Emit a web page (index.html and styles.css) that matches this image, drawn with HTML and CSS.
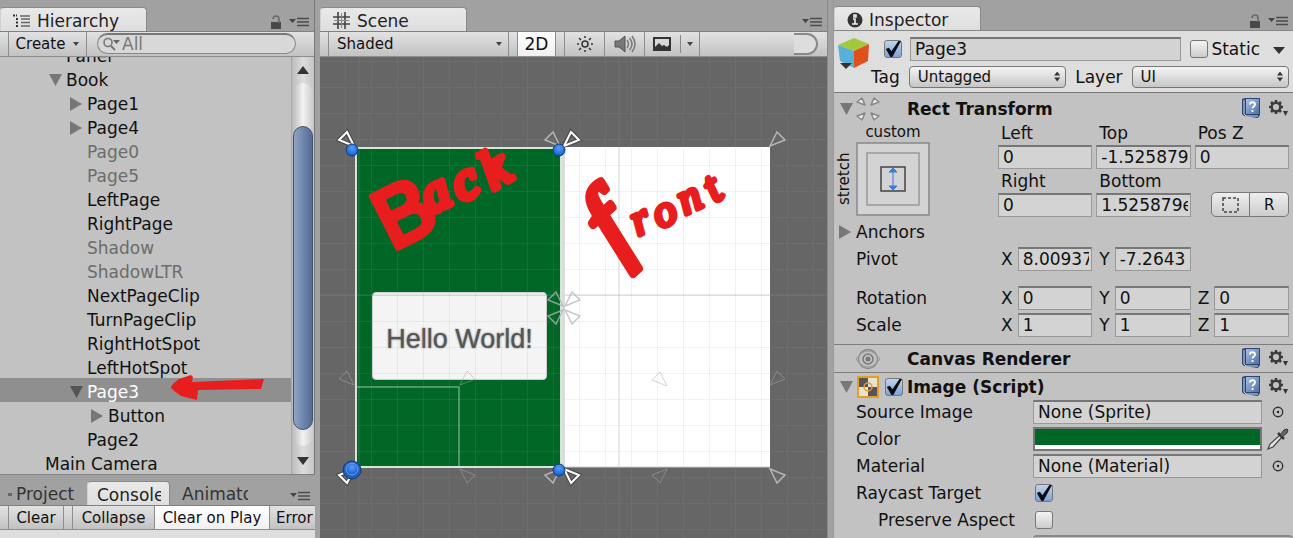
FILE: index.html
```html
<!DOCTYPE html>
<html lang="en">
<head>
<meta charset="utf-8">
<title>Editor</title>
<link rel="stylesheet" href="styles.css">
</head>
<body>
<svg class="defs" aria-hidden="true">
  <defs>
    <linearGradient id="bookFill" x1="0" y1="0" x2="1" y2="1"><stop offset="0" stop-color="#a9bfdd"/><stop offset="1" stop-color="#4d6fa4"/></linearGradient>
    <radialGradient id="knob" cx=".5" cy=".35" r=".7"><stop offset="0" stop-color="#5b9df5"/><stop offset="1" stop-color="#0a55cf"/></radialGradient>
    <symbol id="i-lock" viewBox="0 0 12 15"><path d="M1 7h10v7H1z" fill="#484848"/><path d="M3 4a3 3 0 0 1 6 0v4" fill="none" stroke="#6a6a6a" stroke-width="1.6"/></symbol>
    <symbol id="i-menu" viewBox="0 0 20 10"><path d="M0 2h7L3.500 6z" fill="#444"/><path d="M8 1.500h12M8 5h12M8 8.500h12" stroke="#4c4c4c" stroke-width="1.600"/></symbol>
    <symbol id="i-book" viewBox="0 0 20 22"><path d="M1 2l3-1h15v17l-2 3-14-2-2-2z" fill="#2c4674"/><path d="M5 2h13v15H5z" fill="url(#bookFill)"/><path d="M3 3v14l2 2h12" fill="none" stroke="#d5dfee"/><path d="M9 7.500c0-3 5-3 5 0 0 2-2.500 2-2.500 4M11.500 13v2" fill="none" stroke="#fff" stroke-width="1.800"/></symbol>
    <symbol id="i-gear" viewBox="0 0 20 18"><circle cx="8" cy="8" r="4.300" fill="none" stroke="#3b3b3b" stroke-width="2.400"/><path d="M8 1v2M8 13v2M1 8h2M13 8h2M3 3l1.500 1.500M11.500 11.500L13 13M3 13l1.500-1.500M11.500 4.500L13 3" stroke="#3b3b3b" stroke-width="2.600"/><path d="M15 12h5l-2.500 5z" fill="#333"/></symbol>
    <symbol id="i-target" viewBox="0 0 12 12"><circle cx="6" cy="6" r="4.700" fill="none" stroke="#333" stroke-width="1.400"/><circle cx="6" cy="6" r="1.200" fill="#222"/></symbol>
    <path id="tri" d="M1-2L8-16L16-8Z" fill="none"/>
    <pattern id="grid" x="319" y="35" width="26" height="26" patternUnits="userSpaceOnUse"><path d="M0 .5H26M.5 0V26" stroke="#999" stroke-opacity=".13" fill="none"/></pattern>
  </defs>
</svg>

<main class="editor">
  <div class="left">
    <section class="panel hierarchy">
      <header class="tabs">
        <div class="tab active tab-wide">
          <svg width="18" height="14" viewBox="0 0 18 14"><path d="M0 1.500h4M3 5h3M3 8.500h3M3 12h3" stroke="#333" stroke-width="2" stroke-dasharray="2 1"/><path d="M7 2h10M8 5h9M8 8.500h9M8 12h9" stroke="#666" stroke-width="1.300"/></svg>
          <span>Hierarchy</span>
        </div>
        <div class="tab-tools"><svg width="12" height="15"><use href="#i-lock"/></svg><svg width="20" height="10"><use href="#i-menu"/></svg></div>
      </header>
      <div class="toolbar">
        <button class="tool create">Create <i class="caret"></i></button>
        <label class="search"><svg width="18" height="14" viewBox="0 0 18 14"><circle cx="5" cy="5.500" r="4" fill="none" stroke="#777" stroke-width="1.600"/><path d="M8 9l4 4" stroke="#777" stroke-width="2"/><path d="M10 3h7l-3.500 4z" fill="#666"/></svg><input type="text" placeholder="All" aria-label="Search hierarchy"></label>
      </div>
      <div class="tree-wrap">
        <ul class="tree">
          <li class="d1">Panel</li>
          <li class="d1"><i class="arrow down"></i>Book</li>
          <li class="d2"><i class="arrow"></i>Page1</li>
          <li class="d2"><i class="arrow"></i>Page4</li>
          <li class="d2 off">Page0</li>
          <li class="d2 off">Page5</li>
          <li class="d2">LeftPage</li>
          <li class="d2">RightPage</li>
          <li class="d2 off">Shadow</li>
          <li class="d2 off">ShadowLTR</li>
          <li class="d2">NextPageClip</li>
          <li class="d2">TurnPageClip</li>
          <li class="d2">RightHotSpot</li>
          <li class="d2">LeftHotSpot</li>
          <li class="d2 selected"><i class="arrow down"></i>Page3
            <svg class="pointer" width="94" height="26" viewBox="0 0 94 26"><path d="M0 12Q1 9 8 4L20 0l2 2-1 5 72-3-3 10-63 1-1 10-16-4Q4 17 0 13z" fill="#e81e1e"/></svg></li>
          <li class="d3"><i class="arrow"></i>Button</li>
          <li class="d2">Page2</li>
          <li class="d0">Main Camera</li>
        </ul>
        <div class="scrollbar"><i class="up"></i><div class="track"><div class="thumb"></div></div><i class="dn"></i></div>
      </div>
    </section>
    <section class="panel console">
      <header class="tabs">
        <div class="tab"><i class="dot"></i>Project</div>
        <div class="tab active clip"><span>Console</span></div>
        <div class="tab clip anim"><span>Animator</span></div>
        <div class="tab-tools"><svg width="20" height="10"><use href="#i-menu"/></svg></div>
      </header>
      <div class="toolbar">
        <button class="tool clear">Clear</button>
        <button class="tool collapse">Collapse</button>
        <button class="tool on">Clear on Play</button>
        <button class="tool error">Error</button>
      </div>
      <div class="log"></div>
    </section>
  </div>

  <section class="panel scene">
    <header class="tabs">
      <div class="tab active tab-wide">
        <svg width="18" height="18" viewBox="0 0 18 18"><path d="M0 5h17M0 12h17M5 0v17M12 0v17" stroke="#444" stroke-width="1.600"/><path d="M1 8.500h15M8.500 1v15" stroke="#888"/></svg>
        <span>Scene</span>
      </div>
      <div class="tab-tools"><svg width="20" height="10"><use href="#i-menu"/></svg></div>
    </header>
    <div class="toolbar">
      <button class="tool shaded">Shaded <i class="caret"></i></button>
      <button class="tool on two-d">2D</button>
      <button class="tool icon" aria-label="Lighting"><svg width="18" height="18" viewBox="0 0 18 18"><circle cx="9" cy="9" r="3" fill="none" stroke="#333" stroke-width="1.500"/><path d="M9 1v2M9 15v2M1 9h2M15 9h2M3 3l2 2M13 13l2 2M3 15l2-2M13 5l2-2" stroke="#333" stroke-width="1.500"/></svg></button>
      <button class="tool icon" aria-label="Audio"><svg width="22" height="18" viewBox="0 0 22 18"><path d="M1 6h4l6-5v16l-6-5H1z" fill="#777" stroke="#555"/><path d="M13 5q3 4 0 8M15.500 3q5 6 0 12M18 1q6 8 0 16" fill="none" stroke="#777" stroke-width="1.500"/></svg></button>
      <button class="tool effects" aria-label="Effects"><svg width="18" height="14" viewBox="0 0 18 14"><path d="M0 0h18v14H0z" fill="#333"/><path d="M2 2h14v6l-2 2-3-2-2 1-3-3-4 4z" fill="#d8d8d8"/></svg><i class="sep"></i><i class="caret"></i></button>
      <div class="search-end"><i></i></div>
    </div>
    <div class="view">
      <svg viewBox="320 57 507 481" preserveAspectRatio="xMidYMid slice">
        <rect x="320" y="57" width="507" height="481" fill="#666"/>
        <path d="M561 147H770V467H561z" fill="#fff"/>
        <path d="M356 147H561V467H356z" fill="#006727"/>
        <foreignObject x="372" y="292" width="175" height="88"><button class="hello">Hello World!</button></foreignObject>
        <rect x="320" y="57" width="507" height="481" fill="url(#grid)"/>
        <path d="M320 295H827M619 57V538M359 57V538" stroke="#888" stroke-opacity=".35" fill="none"/>
        <path d="M563 147V467" stroke="#dcdcdc" stroke-width="4"/>
        <path d="M356 387H459V467" fill="none" stroke="#c8dccb" stroke-opacity=".4" stroke-width="2"/>
        <path d="M356 148H561V467H356z" fill="none" stroke="#d5e6d8" stroke-width="2"/>
        <path d="M561 467H770" stroke="#ccc"/>
        <g stroke="#222" stroke-opacity=".45" stroke-width="4">
          <use href="#tri" transform="translate(355 148) scale(-1 1)"/><use href="#tri" transform="translate(563 148)"/><use href="#tri" transform="translate(563 467) scale(1 -1)"/><use href="#tri" transform="translate(355 467) scale(-1 -1)"/>
        </g>
        <g stroke="#fff" stroke-width="2">
          <use href="#tri" transform="translate(355 148) scale(-1 1)"/><use href="#tri" transform="translate(563 148)"/><use href="#tri" transform="translate(563 467) scale(1 -1)"/><use href="#tri" transform="translate(355 467) scale(-1 -1)"/>
        </g>
        <g stroke="#b5b5b5" stroke-width="1.500">
          <use href="#tri" transform="translate(561 148) scale(-1 1)"/><use href="#tri" transform="translate(561 467) scale(-1 -1)"/><use href="#tri" transform="translate(769 148)"/><use href="#tri" transform="translate(769 467) scale(1 -1)"/>
          <g stroke-opacity=".75"><use href="#tri" transform="translate(564 308)"/><use href="#tri" transform="translate(564 308) scale(-1 1)"/><use href="#tri" transform="translate(564 308) scale(1 -1)"/><use href="#tri" transform="translate(564 308) scale(-1 -1)"/></g>
        </g>
        <g stroke="#aaa" stroke-opacity=".5">
          <use href="#tri" transform="translate(355 387) scale(-1 1)"/><use href="#tri" transform="translate(459 387)"/><use href="#tri" transform="translate(459 467) scale(1 -1)"/><use href="#tri" transform="translate(769 387)"/><use href="#tri" transform="translate(668 388) scale(-1 1)"/><use href="#tri" transform="translate(668 467) scale(-1 -1)"/>
        </g>
        <g fill="url(#knob)" stroke="#123a7c"><circle cx="352" cy="150" r="6"/><circle cx="559" cy="150" r="6"/><circle cx="559" cy="470" r="6"/><circle cx="352" cy="470" r="9" fill="#1f5fba"/><circle cx="352" cy="469" r="6" stroke="#6aa2ee"/></g>
        <g class="ink">
          <text><tspan class="ink-cap" x="392" y="251" rotate="-27">B</tspan><tspan class="ink-word" x="430 461 493" y="214 202 190" rotate="-25 -25 -30">ack</tspan></text>
          <text><tspan class="ink-f" x="618" y="259" rotate="-42">f</tspan><tspan class="ink-small" x="638 660 685 715" y="236 229 215 203" rotate="-25 -25 -25 -35">ront</tspan></text>
        </g>
      </svg>
    </div>
  </section>

  <section class="panel inspector">
    <header class="tabs">
      <div class="tab active tab-wide">
        <svg width="16" height="16" viewBox="0 0 16 16"><circle cx="8" cy="8" r="7.500" fill="#333"/><path d="M6 7h2v5M5 12h6M7 3h2v2H7z" fill="none" stroke="#eee" stroke-width="1.600"/></svg>
        <span>Inspector</span>
      </div>
      <div class="tab-tools"><svg width="12" height="15"><use href="#i-lock"/></svg><svg width="20" height="10"><use href="#i-menu"/></svg></div>
    </header>
    <div class="object">
      <svg class="cube" width="34" height="34" viewBox="0 0 34 34"><path d="M1 8L17 1l15 6-15 7z" fill="#a4c83c"/><path d="M1 8l16 6v17L3 24z" fill="#59b0d8"/><path d="M17 14L32 7l-1 17-14 7z" fill="#e0501c"/><path d="M3 26h12l-6 6z" fill="#333"/></svg>
      <div class="object-rows">
        <div class="name-row">
          <input type="checkbox" checked aria-label="Active">
          <input type="text" class="field name" value="Page3" aria-label="Name">
          <label class="static"><input type="checkbox">Static</label><i class="caret big"></i>
        </div>
        <div class="tag-row">
          <label for="tag">Tag</label><div class="sel"><select id="tag"><option>Untagged</option></select></div>
          <label for="layer">Layer</label><div class="sel"><select id="layer"><option>UI</option></select></div>
        </div>
      </div>
    </div>

    <div class="component rect">
      <h2><i class="arrow down"></i><svg class="ricon" width="26" height="26" viewBox="0 0 26 26"><path d="M2 6l5-4 3 7zM24 6l-5-4-3 7zM2 20l5 4 3-7zM24 20l-5 4-3-7z" fill="#ececec" stroke="#888" stroke-width="1.500" stroke-linejoin="round"/></svg><span>Rect Transform</span><svg width="20" height="22"><use href="#i-book"/></svg><svg width="20" height="18"><use href="#i-gear"/></svg></h2>
      <div class="layout">
        <div class="anchor">
          <span class="custom">custom</span><span class="stretch">stretch</span>
          <svg width="74" height="74" viewBox="0 0 74 74"><path d="M1 1h72v72H1z" fill="#d3d3d3" stroke="#888" stroke-width="1.500"/><path d="M11 11h52v52H11z" fill="none" stroke="#999" stroke-width="1.500"/><path d="M25 25h24v24H25z" fill="none" stroke="#444" stroke-width="1.500"/><path d="M37 27v20M33 30h8l-4-4zM33 44h8l-4 4z" fill="#3b7ddd" stroke="#3b7ddd"/></svg>
        </div>
        <div class="triple stacked">
          <label for="l">Left</label><label for="t">Top</label><label for="z">Pos Z</label>
          <input class="field" id="l" value="0"><input class="field" id="t" value="-1.525879"><input class="field" id="z" value="0">
          <label for="r">Right</label><label for="b">Bottom</label><span></span>
          <input class="field" id="r" value="0"><input class="field" id="b" value="1.525879e-05">
          <div class="modes"><button aria-label="Blueprint mode"><svg width="17" height="16" viewBox="0 0 17 16"><path d="M1 1h15v14H1z" fill="none" stroke="#444" stroke-width="1.500" stroke-dasharray="3 2"/></svg></button><button>R</button></div>
        </div>
      </div>
      <div class="row anchors"><span class="label"><i class="arrow"></i>Anchors</span></div>
      <div class="row"><span class="label">Pivot</span><div class="triple"><label>X<input class="field" value="8.00937"></label><label>Y<input class="field" value="-7.2643"></label></div></div>
      <div class="row spaced"><span class="label">Rotation</span><div class="triple"><label>X<input class="field" value="0"></label><label>Y<input class="field" value="0"></label><label>Z<input class="field" value="0"></label></div></div>
      <div class="row"><span class="label">Scale</span><div class="triple"><label>X<input class="field" value="1"></label><label>Y<input class="field" value="1"></label><label>Z<input class="field" value="1"></label></div></div>
    </div>

    <div class="component">
      <h2><svg class="ricon lone" width="26" height="22" viewBox="0 0 26 22"><circle cx="13" cy="11" r="9.500" fill="none" stroke="#888" stroke-width="1.300"/><path d="M1 11Q7 3 13 3t12 8Q19 19 13 19T1 11z" fill="none" stroke="#999"/><circle cx="13" cy="11" r="5" fill="none" stroke="#777" stroke-width="1.500"/><circle cx="13" cy="11" r="2.500" fill="#777"/></svg><span>Canvas Renderer</span><svg width="20" height="22"><use href="#i-book"/></svg><svg width="20" height="18"><use href="#i-gear"/></svg></h2>
    </div>

    <div class="component image">
      <h2><i class="arrow down"></i><svg class="sicon" width="22" height="22" viewBox="0 0 22 22"><path d="M1 1h20v20H1z" fill="#e9e2d2"/><path d="M2 2h9v9H2zM11 11h9v9h-9z" fill="#555"/><path d="M1 1h20v20H1z" fill="none" stroke="#e89c28" stroke-width="2"/><circle cx="11" cy="11" r="4" fill="none" stroke="#e89c28" stroke-width="1.500"/></svg><input type="checkbox" checked aria-label="Image enabled"><span>Image (Script)</span><svg width="20" height="22"><use href="#i-book"/></svg><svg width="20" height="18"><use href="#i-gear"/></svg></h2>
      <div class="prop"><label for="src">Source Image</label><input class="field" id="src" value="None (Sprite)"><svg width="12" height="12"><use href="#i-target"/></svg></div>
      <div class="prop"><span>Color</span><button class="swatch" aria-label="Color"></button><svg class="dropper" width="22" height="22" viewBox="0 0 22 22"><path d="M1 21l2-5L13 7l2 2L6 19z" fill="#e4e4e4" stroke="#444" stroke-width="1.200"/><path d="M11 5l6 6" stroke="#333" stroke-width="2.500"/><path d="M13 7l4-5 3-1 1 1-1 3-5 4z" fill="#666" stroke="#333"/></svg></div>
      <div class="prop"><label for="mat">Material</label><input class="field" id="mat" value="None (Material)"><svg width="12" height="12"><use href="#i-target"/></svg></div>
      <div class="prop"><label for="ray">Raycast Target</label><input type="checkbox" id="ray" checked></div>
      <div class="prop sub"><label for="asp">Preserve Aspect</label><input type="checkbox" id="asp"></div>
      <div class="next"></div>
    </div>
  </section>
</main>
</body>
</html>
```
FILE: styles.css
```css
* { box-sizing: border-box; }
body { margin: 0; background: #a1a1a1; color: #111; font: 17px/24px "DejaVu Sans", sans-serif; overflow: hidden; }
.defs { position: absolute; width: 0; height: 0; }
svg { flex: none; display: block; }
button, input, select { font: inherit; color: inherit; margin: 0; border-radius: 0; }
i { flex: none; }

.editor { display: grid; grid-template-columns: 315fr 508fr 460fr; gap: 5px; height: 100vh; }
.left, .panel { display: flex; flex-direction: column; min-width: 0; min-height: 0; }
.hierarchy { flex: 1; border-right: 1px solid #777; border-bottom: 1px solid #808080; }
.scene { border-right: 1px solid #888; }

/* tabs and toolbars */
.tabs { display: flex; align-items: flex-end; height: 31px; flex: none; color: #333; }
.tab { display: flex; align-items: center; height: 24px; white-space: nowrap; padding-top: 2px; }
.tab.active { background: linear-gradient(#e9e9e9, #dedede); border: 1px solid #8a8a8a; border-bottom: 0; border-left-color: #d0d0d0; border-radius: 4px 4px 0 0; color: #222; }
.tab-wide { width: 147px; gap: 6px; padding-left: 12px; }
.tab-tools { margin-left: auto; display: flex; align-items: center; gap: 7px; padding-right: 5px; height: 18px; }
.toolbar { display: flex; flex: none; height: 26px; border-top: 1px solid #808080; border-bottom: 1px solid #8d8d8d; background: linear-gradient(#e2e2e2, #c2c2c2); padding-left: 8px; overflow: hidden; font-size: 15px; }
.tool { display: flex; align-items: center; justify-content: center; border: solid #8d8d8d; border-width: 0 1px; background: none; padding: 0; white-space: nowrap; flex: none; }
.tool.on { background: linear-gradient(#fff, #f0f0f0); }
.caret { border: solid transparent; border-width: 4px 3px 0; border-top-color: #444; }
.caret.big { border-width: 7px 6px 0; border-top-color: #333; }

.create { width: 79px; gap: 8px; }
.search { display: flex; align-items: center; flex: 1; min-width: 0; margin: 1px 18px 2px 10px; border: 1px solid #888; border-top: 2px solid #777; border-radius: 12px; background: #d8d8d8; padding-left: 5px; }
.search input { flex: 1; width: 0; min-width: 0; border: 0; background: none; padding: 0 1px; height: 18px; outline: 0; font-size: 17px; }
.search input::placeholder { color: #777; opacity: 1; }

/* hierarchy tree */
.tree-wrap { flex: 1; display: flex; min-height: 0; background: #c2c2c2; }
.tree { flex: 1; display: flex; flex-direction: column; justify-content: flex-end; overflow: hidden; list-style: none; margin: 0; padding: 0; }
.tree li { flex: none; height: 24px; padding-top: 4px; display: flex; align-items: center; }
.tree .d0 { padding-left: 45px; }
.tree .d1 { padding-left: 66px; }
.tree .d2 { padding-left: 87px; }
.tree .d3 { padding-left: 108px; }
.tree .off { color: #6c6c6c; }
.tree .selected { background: #8f8f8f; color: #fff; }
.arrow { width: 12px; height: 14px; background: #777; clip-path: polygon(0 0, 100% 50%, 0 100%); }
.arrow.down { width: 13px; height: 12px; clip-path: polygon(0 0, 100% 0, 50% 100%); }
.tree .arrow { margin-left: -17px; margin-right: 5px; }
.tree .arrow.down { margin-right: 4px; }
.selected .arrow { background: #555; }
.pointer { margin-left: 32px; margin-top: -8px; }
.scrollbar { width: 23px; display: flex; flex-direction: column; align-items: center; border-left: 1px solid #aaa; background: linear-gradient(90deg, #bbb, #ddd, #c4c4c4); }
.up { margin: 9px 0; border: solid transparent; border-width: 0 6px 8px; border-bottom-color: #333; }
.dn { margin: 11px 0 9px; border: solid transparent; border-width: 8px 6px 0; border-top-color: #333; }
.track { flex: 1; width: 20px; border-radius: 10px; padding-top: 43px; padding-bottom: 16px; background: linear-gradient(90deg, #bcbcbc, #f2f2f2, #ccc); }
.thumb { height: 100%; border: 1px solid #3f5272; border-radius: 10px; background: linear-gradient(90deg, #8fa4c6, #647ba2 70%, #566b90); }

/* console */
.console .tabs { height: 30px; padding-top: 7px; }
.console .tabs .tab:first-child { gap: 4px; padding-left: 8px; width: 87px; }
.dot { width: 4px; height: 3px; background: #666; }
.tab.clip { width: 83px; padding-left: 9px; padding-right: 8px; }
.tab.clip span { overflow: hidden; }
.tab.anim { width: 78px; padding-left: 12px; padding-right: 0; }
.console .toolbar { height: 25px; }
.clear { width: 56px; }
.collapse { width: 83px; margin-left: 8px; }
.console .on { width: 115px; border-left: 0; }
.error { padding-left: 6px; border-width: 0; }
.log { height: 8px; background: #dedede; }

/* scene */
.shaded { width: 181px; justify-content: space-between; padding: 0 6px 0 8px; }
.two-d { width: 39px; margin: 0 8px; font-size: 17px; }
.icon { width: 40px; border-right: 0; }
.effects { width: 56px; gap: 6px; padding-left: 2px; }
.sep { width: 1px; height: 18px; background: #888; margin-left: 3px; }
.search-end { margin-left: auto; width: 33px; overflow: hidden; display: flex; }
.search-end i { width: 24px; margin: 1px 0; border: 2px solid #888; border-left: 0; border-radius: 0 12px 12px 0; background: #ddd; }
.view { flex: 1; min-height: 0; background: #666; overflow: hidden; }
.view svg { width: 100%; height: 100%; }
.hello { display: block; width: 100%; height: 100%; border: 1px solid #ccc; border-radius: 4px; background: #f4f4f4; color: #555; font: 27px "Liberation Sans", sans-serif; padding: 6px 0 0; white-space: nowrap; text-shadow: 0 0 2px #666; }
.ink { fill: #e81e1e; stroke: #e81e1e; stroke-width: 5px; stroke-linejoin: round; font-family: "Liberation Serif", serif; font-style: italic; }
.ink-cap { font: 84px "Liberation Sans", sans-serif; stroke-width: 6px; }
.ink-f { font-size: 100px; stroke-width: 8px; }
.ink-word { font-size: 54px; stroke-width: 7px; }
.ink-small { font-size: 44px; }

/* inspector */
.inspector { border-left: 1px solid #999; background: #c2c2c2; }
.inspector > .tabs { background: #a1a1a1; height: 30px; }
.inspector h2, .object, .row, .prop { flex: none; }
.object { display: flex; height: 63px; padding: 6px 4px 5px 3px; background: #dedede; border-top: 1px solid #888; border-bottom: 1px solid #777; }
.object-rows { flex: 1; min-width: 0; }
.name-row { display: flex; align-items: center; height: 24px; padding-left: 13px; }
.name-row .name { flex: 1; margin: 0 9px 0 8px; }
.static { display: flex; align-items: center; gap: 3px; }
.static + .caret { margin: 2px 4px 0 13px; }
.tag-row { display: flex; align-items: center; height: 23px; margin-top: 4px; gap: 9px; white-space: nowrap; }
.sel { position: relative; flex: 1; height: 22px; }
.sel::after { content: ""; position: absolute; right: 6px; top: 6px; width: 6px; height: 10px; background: #333; clip-path: polygon(50% 0, 100% 40%, 0 40%, 0 60%, 100% 60%, 50% 100%, 0 60%, 0 40%); }
.sel select { display: block; appearance: none; width: 100%; height: 22px; padding: 0 8px; border: 1px solid #777; border-radius: 4px; background: linear-gradient(#f4f4f4, #c6c6c6); font-size: 15px; line-height: 18px; }
input[type=checkbox] { appearance: none; flex: none; width: 18px; height: 18px; border: 1px solid #777; border-radius: 3px; background: linear-gradient(#f4f4f4, #ccc); }
input[type=checkbox]:checked { background: linear-gradient(#c3d3ea, #7fa2d4); display: grid; place-items: center; }
input[type=checkbox]:checked::after { content: ""; width: 16px; height: 16px; background: #0c0c14; clip-path: polygon(5% 50%, 24% 42%, 40% 64%, 84% 0, 100% 0, 46% 100%, 34% 100%); }
.field { display: block; width: 100%; min-width: 0; height: 24px; padding: 0 2px 2px 4px; border: 1px solid #999; border-top: 2px solid #777; background: #d3d3d3; outline: 0; }

.component { border-bottom: 1px solid #7d7d7d; flex: none; }
.component h2 { display: flex; align-items: center; height: 27px; margin: 0; font-size: 17px; line-height: 24px; padding: 1px 4px 0 6px; }
.component h2 > span { flex: 1; }
.component h2 > span ~ svg { margin-top: -3px; }
.component h2 > span ~ svg + svg { margin-left: 7px; margin-right: 1px; }
.rect { padding: 2px 0 7px; }
.ricon { margin: 0 26px 0 2px; }
.ricon.lone { margin-left: 15px; }
.sicon { margin: 0 6px 0 4px; }
.sicon + input { margin-right: 4px; }
.layout { display: flex; padding-right: 4px; margin-top: -1px; }
.anchor { width: 164px; display: grid; grid-template-columns: 22px 74px; grid-template-rows: 21px 74px; flex: none; font-size: 15px; }
.custom { grid-column: 2; text-align: center; line-height: 23px; }
.stretch { grid-column: 1; writing-mode: vertical-rl; transform: rotate(180deg); text-align: center; line-height: 20px; }
.triple { flex: 1; display: grid; grid-template-columns: repeat(3, minmax(0, 1fr)); column-gap: 4px; min-width: 0; }
.triple label { padding-left: 3px; }
.triple:not(.stacked) label { display: flex; gap: 5px; }
.modes { display: flex; margin: -1px 0 0 16px; height: 25px; }
.modes button { flex: 1; display: grid; place-items: center; padding: 0; border: 1px solid #777; border-radius: 5px 0 0 5px; background: linear-gradient(#eee, #ccc); font-size: 15px; }
.modes button + button { border-left: 0; border-radius: 0 5px 5px 0; }
.row { display: flex; height: 24px; margin-top: 3px; padding-right: 4px; }
.row.spaced { margin-top: 15px; }
.row .label { width: 164px; padding-left: 22px; flex: none; display: flex; align-items: center; }
.row .arrow { margin-left: -17px; margin-right: 5px; }
.prop { display: grid; grid-template-columns: 199px 1fr 31px; align-items: center; height: 24px; margin-bottom: 3px; }
.prop > :first-child { padding-left: 22px; }
.prop.sub > :first-child { padding-left: 44px; }
.prop > svg { justify-self: center; }
.prop input[type=checkbox] { margin-left: 2px; }
.swatch { height: 24px; padding: 0; border: 2px solid #777; background: linear-gradient(#006727 80%, #fff 80%); }
.image { border: 0; }
.next { height: 8px; border-top: 2px solid #888; margin-left: 199px; border-radius: 4px; }
```
